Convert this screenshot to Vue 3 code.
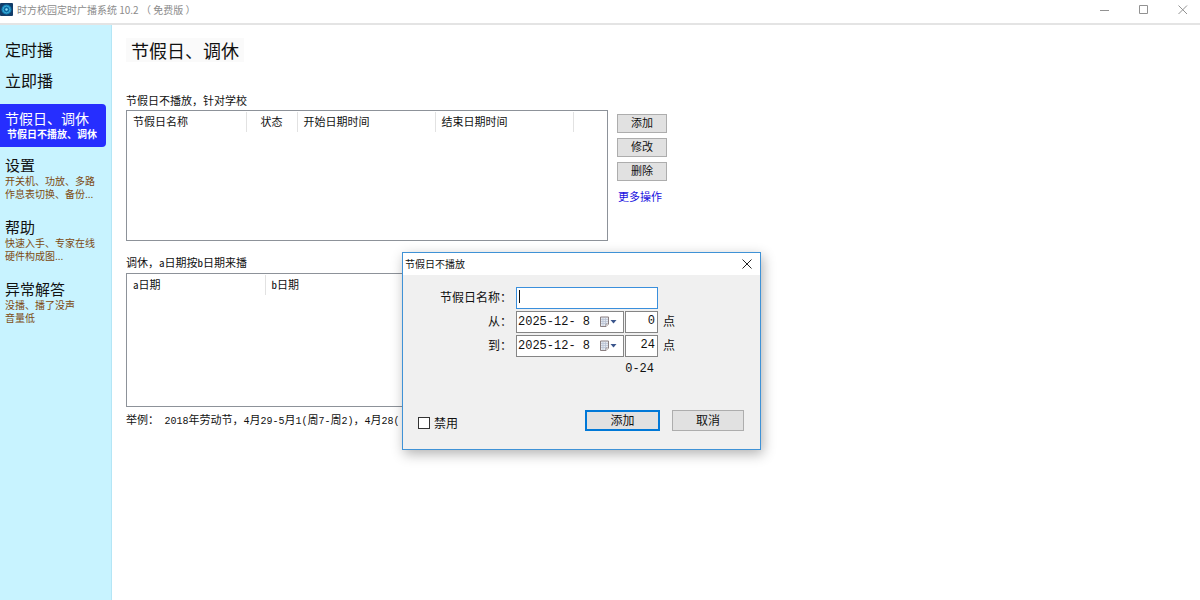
<script setup>
import { ref } from 'vue'

const primaryNav = ['定时播', '立即播']
const sections = [
  { title: '设置', lines: ['开关机、功放、多路', '作息表切换、备份...'] },
  { title: '帮助', lines: ['快速入手、专家在线', '硬件构成图...'] },
  { title: '异常解答', lines: ['没播、播了没声', '音量低'] },
]
const actions = ['添加', '修改', '删除']
const example = '举例： 2018年劳动节，4月29-5月1(周7-周2)，4月28('
// Runs of ASCII and of Chinese text alternate, each with its own font.
const exampleParts = example.match(/[\x21-\x7e]+|[^\x21-\x7e]+/g)
const isAscii = (text) => /^[\x21-\x7e]/.test(text)
const name = ref('')
const disabled = ref(false)
const range = ref([
  { id: 'from', label: '从：', date: '2025-12- 8', hour: '0' },
  { id: 'to', label: '到：', date: '2025-12- 8', hour: '24' },
])
</script>

<template>
  <div class="window">
    <header class="titlebar">
      <svg class="logo" width="13" height="13" viewBox="0 0 13 13" aria-hidden="true">
        <rect width="13" height="13" rx="1" fill="#123d69" />
        <circle cx="6.5" cy="6.5" r="5" fill="#1683b8" />
        <circle cx="6.5" cy="6.5" r="3.4" fill="#0b6aa3" stroke="#48bfe6" stroke-width=".8" />
        <circle cx="6.5" cy="6.5" r="1.2" fill="#8be4fa" />
      </svg>
      <span class="app-name">时方校园定时广播系统  10.2  （ 免费版 ）</span>
      <div class="window-buttons">
        <button type="button" aria-label="最小化">
          <svg width="10" height="10" viewBox="0 0 10 10"><path d="M0 5.5H9" /></svg>
        </button>
        <button type="button" aria-label="最大化">
          <svg width="10" height="10" viewBox="0 0 10 10"><path d="M.5 .5H8.5V8.5H.5Z" /></svg>
        </button>
        <button type="button" aria-label="关闭">
          <svg width="10" height="10" viewBox="0 0 10 10"><path d="M.5 .5L9 9M9 .5L.5 9" /></svg>
        </button>
      </div>
    </header>

    <div class="body">
      <nav class="sidebar">
        <a v-for="item in primaryNav" :key="item" class="nav-main" href="#">{{ item }}</a>
        <a class="nav-active" href="#">
          <span class="nav-title">节假日、调休</span>
          <strong>节假日不播放、调休</strong>
        </a>
        <a v-for="s in sections" :key="s.title" class="nav-section" href="#">
          <span class="nav-title">{{ s.title }}</span>
          <span v-for="line in s.lines" :key="line" class="nav-line">{{ line }}</span>
        </a>
      </nav>

      <main class="content">
        <h1>节假日、调休</h1>

        <h2>节假日不播放，针对学校</h2>
        <div class="row">
          <div class="list holidays">
            <table>
              <colgroup><col class="c-name" /><col class="c-state" /><col class="c-time" /><col class="c-time" /><col /></colgroup>
              <thead>
                <tr><th>节假日名称</th><th class="center">状态</th><th>开始日期时间</th><th>结束日期时间</th><td></td></tr>
              </thead>
            </table>
          </div>
          <div class="actions">
            <button v-for="a in actions" :key="a" type="button" class="btn">{{ a }}</button>
            <a href="#">更多操作</a>
          </div>
        </div>

        <h2 class="second">调休，a日期按b日期来播</h2>
        <div class="list swaps">
          <table>
            <colgroup><col class="c-time" /><col class="c-time" /><col /></colgroup>
            <thead>
              <tr><th>a日期</th><th>b日期</th><td></td></tr>
            </thead>
          </table>
        </div>
        <p class="example"><span v-for="(part, i) in exampleParts" :key="i" :class="{ ascii: isAscii(part) }">{{ part }}</span></p>
      </main>
    </div>

    <form class="dialog" role="dialog" aria-labelledby="dialog-title" @submit.prevent>
      <div class="dialog-bar">
        <span id="dialog-title">节假日不播放</span>
        <button type="button" aria-label="关闭对话框">
          <svg width="10" height="10" viewBox="0 0 10 10"><path d="M.5 .5L9.5 9.5M9.5 .5L.5 9.5" /></svg>
        </button>
      </div>
      <div class="fields">
        <label for="name">节假日名称：</label>
        <div class="name-box"><input id="name" v-model="name" type="text" /></div>
        <template v-for="r in range" :key="r.id">
          <label :for="r.id">{{ r.label }}</label>
          <div class="time-row">
            <div class="date-box">
              <input :id="r.id" v-model="r.date" type="text" />
              <button type="button" aria-label="选择日期">
                <svg width="18" height="12" viewBox="0 0 18 12">
                  <path d="M1.5 1H9.5V8L7 10.5H1.5Z" fill="#e4e8f0" stroke="#8a7f80" />
                  <path d="M2 3.5H9M2 5.5H9M2 7.5H8M4 1.5V10M6.5 1.5V10" stroke="#b5bfd0" stroke-width=".7" />
                  <path d="M7 10.5V8H9.5" fill="#fff" stroke="#8a7f80" stroke-width=".7" />
                  <path d="M11.5 4H17.5L14.5 7.5Z" fill="#3b568c" />
                </svg>
              </button>
            </div>
            <input :id="r.id + '-hour'" v-model="r.hour" class="hour" type="text" />
            <label class="unit" :for="r.id + '-hour'">点</label>
          </div>
        </template>
        <span class="hint">0-24</span>
      </div>
      <div class="dialog-footer">
        <label class="check"><input v-model="disabled" type="checkbox" />禁用</label>
        <button type="submit" class="btn primary">添加</button>
        <button type="button" class="btn">取消</button>
      </div>
    </form>
  </div>
</template>

<style>
body {
  background: #fff;
}
</style>

<style scoped>
.window {
  --sans: "Noto Sans CJK SC", sans-serif;
  --grid: "Noto Sans Mono CJK SC", "Noto Sans CJK SC", monospace;
  --digits: "Liberation Mono", "Noto Sans CJK SC", monospace;
  position: relative;
  display: flex;
  flex-direction: column;
  min-height: 100vh;
  font-family: var(--grid);
  font-size: 11px;
  line-height: 16px;
  color: #111;
}
.window * {
  box-sizing: border-box;
}
button,
input {
  font: inherit;
  color: inherit;
  margin: 0;
  padding: 0;
}
a {
  text-decoration: none;
}
.titlebar {
  display: flex;
  align-items: center;
  height: 25px;
  padding-bottom: 4px;
  border-bottom: 2px solid #e4e4e4;
  font-family: var(--sans);
  font-size: 10px;
  color: #8c8c8c;
}
.app-name {
  margin-left: 4px;
  white-space: pre;
}
.window-buttons {
  display: flex;
  gap: 15px;
  margin-left: auto;
  padding-right: 5px;
}
.window-buttons button,
.dialog-bar button {
  display: flex;
  align-items: center;
  justify-content: center;
  width: 24px;
  height: 18px;
  border: 0;
  background: none;
}
.window-buttons path {
  fill: none;
  stroke: #929292;
}
.body {
  display: flex;
  flex: 1;
}
.sidebar {
  display: flex;
  flex-direction: column;
  flex: none;
  width: 112px;
  padding-top: 10px;
  background: #c8f3ff;
  border-right: 1px solid #b4e6f6;
  font-family: var(--sans);
}
.nav-main {
  height: 31px;
  padding-left: 5px;
  font-size: 16px;
  line-height: 28px;
  color: #111;
}
.nav-active {
  display: flex;
  flex-direction: column;
  height: 43px;
  margin: 7px 5px 8px 0;
  padding: 5px 0 0 5px;
  border-radius: 0 4px 4px 0;
  background: #262eff;
  color: #fff;
}
.nav-active strong {
  padding-left: 2px;
  font-size: 10px;
  line-height: 14px;
}
.nav-title {
  font-size: 14px;
  line-height: 18px;
}
.nav-section {
  display: flex;
  flex-direction: column;
  margin-bottom: 17px;
  padding-left: 5px;
  color: #111;
}
.nav-section .nav-title {
  font-size: 15px;
  line-height: 19px;
}
.nav-line {
  font-size: 10px;
  line-height: 13px;
  color: #7d4a12;
}
.content {
  flex: 1;
  padding: 13px 14px 0;
}
h1,
h2,
p {
  margin: 0;
  font-weight: 400;
}
h1 {
  width: max-content;
  padding: 0 5px;
  background: #fafafa;
  font-family: var(--sans);
  font-size: 18px;
  line-height: 24px;
}
h2 {
  margin-top: 30px;
  font-size: 11px;
  line-height: 16px;
}
h2.second {
  margin-top: 13px;
}
.row {
  display: flex;
  gap: 9px;
  margin-top: 2px;
}
.list {
  width: 482px;
  border: 1px solid #8d9299;
}
.holidays {
  height: 131px;
}
.swaps {
  height: 134px;
  margin-top: 3px;
}
table {
  width: 100%;
  margin-top: 1px;
  border-collapse: collapse;
  table-layout: fixed;
}
th,
td {
  height: 20px;
  padding: 0 0 2px 6px;
  border-right: 1px solid #e2e2e2;
  font-weight: 400;
  line-height: 16px;
  text-align: left;
}
td {
  border-right: 0;
}
th.center {
  padding-left: 0;
  text-align: center;
}
.c-name {
  width: 119px;
}
.c-state {
  width: 51px;
}
.c-time {
  width: 138px;
}
.actions {
  display: flex;
  flex-direction: column;
  gap: 5px;
  width: 50px;
  padding-top: 4px;
}
.btn {
  height: 19px;
  padding-bottom: 2px;
  border: 1px solid #adadad;
  background: #e1e1e1;
  line-height: 15px;
}
.actions a {
  margin-top: 2px;
  padding-left: 1px;
  color: #1a10e0;
  white-space: nowrap;
}
.example {
  margin-top: 4px;
  white-space: pre;
}
.ascii {
  font-family: var(--digits);
  font-size: 10px;
}
.dialog {
  position: absolute;
  top: 252px;
  left: 402px;
  width: 359px;
  border: 1px solid #3f92d6;
  background: #f0f0f0;
  box-shadow: 2px 4px 12px rgba(0, 0, 0, 0.3);
  font-size: 12px;
}
.dialog-bar {
  display: flex;
  align-items: center;
  justify-content: space-between;
  height: 22px;
  padding: 0 1px 0 2px;
  background: #fff;
  font-family: var(--sans);
  font-size: 10px;
}
.dialog-bar path {
  stroke: #222;
}
.fields {
  display: grid;
  grid-template-columns: 109px 1fr;
  grid-auto-rows: 22px;
  row-gap: 2px;
  column-gap: 4px;
  padding-top: 12px;
}
.fields label {
  line-height: 20px;
  text-align: right;
}
.name-box {
  position: relative;
  width: 142px;
}
.name-box::before {
  content: "";
  position: absolute;
  top: 3px;
  left: 3px;
  width: 1px;
  height: 13px;
  background: #111;
}
.name-box input {
  width: 100%;
  height: 22px;
  padding: 0 4px;
  border: 1px solid #3a8fdc;
  background: #fff;
}
.time-row {
  display: flex;
  gap: 1px;
}
.date-box {
  display: flex;
  align-items: center;
  width: 108px;
  height: 22px;
  border: 1px solid #858585;
  background: #fff;
}
.date-box input {
  width: 82px;
  padding-left: 1px;
  border: 0;
  background: none;
  font-family: var(--digits);
  font-size: 12px;
  line-height: 18px;
}
.date-box button {
  display: flex;
  border: 0;
  background: none;
}
.hour {
  width: 33px;
  height: 22px;
  padding: 0 2px 2px 0;
  border: 1px solid #858585;
  background: #fff;
  font-family: var(--digits);
  font-size: 12px;
  line-height: 16px;
  text-align: right;
}
.fields .unit {
  padding-left: 4px;
  line-height: 19px;
}
.hint {
  grid-column: 2;
  width: 138px;
  font-family: var(--digits);
  font-size: 12px;
  line-height: 20px;
  text-align: right;
}
.dialog-footer {
  display: flex;
  align-items: center;
  gap: 12px;
  padding: 29px 16px 18px 15px;
}
.check {
  display: flex;
  align-items: center;
  gap: 4px;
  margin-right: auto;
  padding-top: 5px;
}
.check input {
  appearance: none;
  width: 12px;
  height: 12px;
  border: 1px solid #333;
  background: #fff;
}
.check input:checked {
  background: #0078d7;
}
.dialog-footer .btn {
  width: 72px;
  height: 21px;
  line-height: 17px;
}
.dialog-footer .primary {
  width: 75px;
  border: 2px solid #0078d7;
  line-height: 15px;
}
</style>
